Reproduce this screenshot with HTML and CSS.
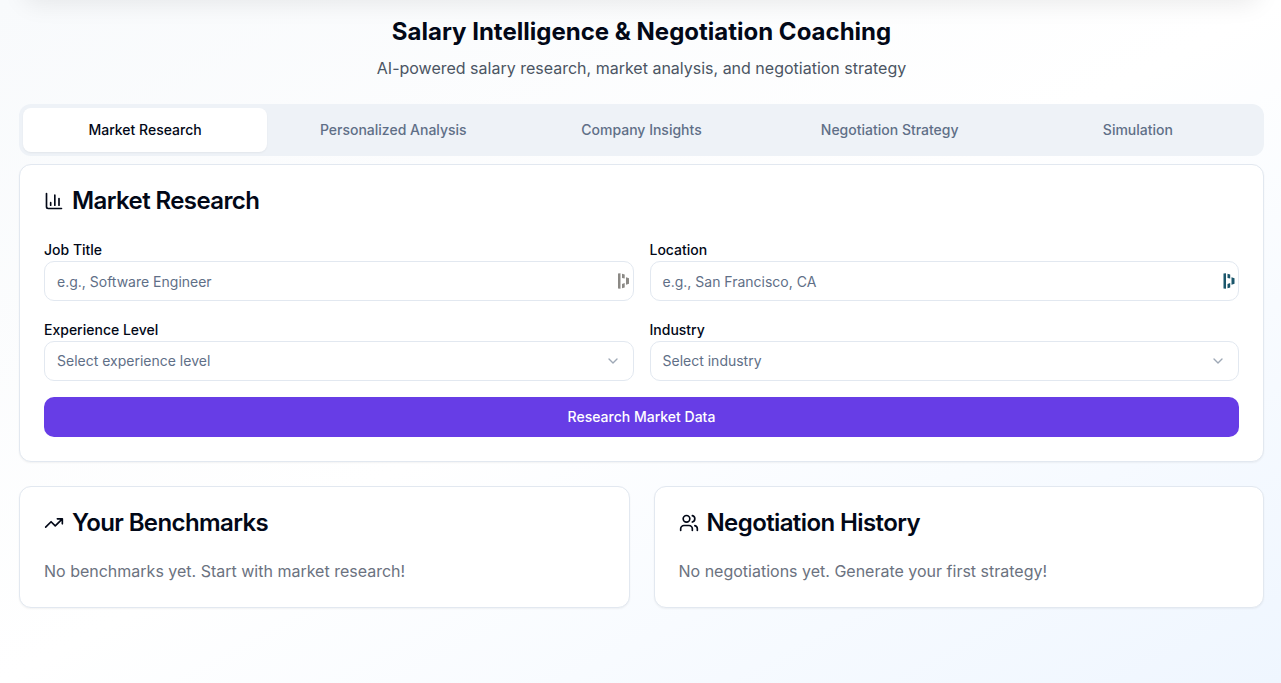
FILE: index.html
```html
<!DOCTYPE html>
<html lang="en">
<head>
<meta charset="utf-8">
<title>Salary Intelligence</title>
<link rel="stylesheet" href="styles.css">
</head>
<body>
<div class="nav-edge"></div>
<main class="page">
  <header class="intro">
    <h1>Salary Intelligence &amp; Negotiation Coaching</h1>
    <p>AI-powered salary research, market analysis, and negotiation strategy</p>
  </header>
  <nav class="tabs">
    <button class="tab tab-active">Market Research</button>
    <button class="tab">Personalized Analysis</button>
    <button class="tab">Company Insights</button>
    <button class="tab">Negotiation Strategy</button>
    <button class="tab">Simulation</button>
  </nav>
  <section class="card">
    <h2 class="card-title">
      <svg class="icon" viewBox="0 0 24 24"><path d="M3 3v16a2 2 0 0 0 2 2h16M18 17V9M13 17V5M8 17v-3"/></svg>
      Market Research
    </h2>
    <div class="form">
      <div class="field">
        <label>Job Title</label>
        <div class="control text-control"><span>e.g., Software Engineer</span>
          <svg class="fill-mark mark-gray" viewBox="0 0 12 16"><path d="M0 .6 2.500.3v15.400L0 15.400zM4 .7l2.700.8v4L4 4.900zM8 4.200l3 1v5.600l-3 1zM4 11l2.700-1v4.500L4 15.300z"/></svg>
        </div>
      </div>
      <div class="field">
        <label>Location</label>
        <div class="control text-control"><span>e.g., San Francisco, CA</span>
          <svg class="fill-mark mark-teal" viewBox="0 0 12 16"><path d="M.5.6 3 .3v15.400L.5 15.400zM4.500.7l2.700.8v4l-2.700-.6zM8.500 4.200l3 1v5.600l-3 1zM4.500 11l2.700-1v4.500l-2.700.8z"/></svg>
        </div>
      </div>
      <div class="field">
        <label>Experience Level</label>
        <div class="control"><span>Select experience level</span>
          <svg class="chevron" viewBox="0 0 24 24"><path d="m6 9 6 6 6-6"/></svg>
        </div>
      </div>
      <div class="field">
        <label>Industry</label>
        <div class="control"><span>Select industry</span>
          <svg class="chevron" viewBox="0 0 24 24"><path d="m6 9 6 6 6-6"/></svg>
        </div>
      </div>
    </div>
    <button class="submit">Research Market Data</button>
  </section>
  <div class="summary">
    <section class="card">
      <h2 class="card-title">
        <svg class="icon" viewBox="0 0 24 24"><path d="m22 7-8.500 8.500-5-5L2 17M16 7h6v6"/></svg>
        Your Benchmarks
      </h2>
      <p class="empty">No benchmarks yet. Start with market research!</p>
    </section>
    <section class="card">
      <h2 class="card-title">
        <svg class="icon" viewBox="0 0 24 24"><path d="M16 21v-2a4 4 0 0 0-4-4H6a4 4 0 0 0-4 4v2"/><circle cx="9" cy="7" r="4"/><path d="M22 21v-2a4 4 0 0 0-3-3.870M16 3.130a4 4 0 0 1 0 7.750"/></svg>
        Negotiation History
      </h2>
      <p class="empty">No negotiations yet. Generate your first strategy!</p>
    </section>
  </div>
</main>
</body>
</html>
```
FILE: styles.css
```css
* { box-sizing: border-box; margin: 0; }
body {
  height: 683px;
  overflow: hidden;
  position: relative;
  font-family: Inter, "Liberation Sans", sans-serif;
  font-size: 16px;
  line-height: 24px;
  color: #020817;
  background: linear-gradient(to bottom right, #f8fafc, #ffffff 50%, #eff6ff);
}
button { border: 0; font: inherit; }
/* shadow cast by the floating bar above the viewport */
.nav-edge {
  position: absolute;
  top: -71px;
  left: 19px;
  right: 17px;
  height: 60px;
  border-radius: 16px;
  box-shadow: 0 20px 25px -5px rgba(0, 0, 0, .08);
}
.page { padding: 16px 17px 0 19px; position: relative; }
.intro { text-align: center; margin-bottom: 24px; }
.intro h1 { font-size: 24px; line-height: 32px; font-weight: 700; margin-bottom: 8px; }
.intro p { color: #4b5563; }
.tabs {
  display: grid;
  grid-template-columns: repeat(5, 1fr);
  gap: 4px;
  height: 52px;
  padding: 4px;
  margin-bottom: 8px;
  border-radius: 12px;
  background: #eef2f7;
}
.tab {
  border-radius: 8px;
  background: transparent;
  color: #5f6f87;
  font-size: 14px;
  line-height: 20px;
  font-weight: 500;
}
.tab-active { background: #fff; color: #020817; box-shadow: 0 1px 2px rgba(0, 0, 0, .05); }
.card {
  padding: 24px;
  border: 1px solid #e2e8f0;
  border-radius: 12px;
  background: #fff;
  box-shadow: 0 1px 2px rgba(0, 0, 0, .05);
}
.card-title {
  display: flex;
  align-items: center;
  gap: 8px;
  margin-bottom: 24px;
  font-size: 24px;
  line-height: 24px;
  font-weight: 600;
  letter-spacing: -.6px;
}
.icon, .chevron { fill: none; stroke: currentColor; stroke-width: 2; stroke-linecap: round; stroke-linejoin: round; }
.icon { width: 20px; height: 20px; }
.form { display: grid; grid-template-columns: 1fr 1fr; gap: 16px; margin-bottom: 16px; }
.field label { display: block; height: 24px; font-size: 14px; line-height: 26px; font-weight: 500; }
.control {
  display: flex;
  align-items: center;
  justify-content: space-between;
  height: 40px;
  padding: 0 12px;
  border: 1px solid #e2e8f0;
  border-radius: 10px;
  color: #5f6f87;
  font-size: 14px;
  line-height: 20px;
}
.text-control { padding-right: 3px; }
.text-control span { padding-top: 1px; }
.chevron { width: 16px; height: 16px; opacity: .6; }
.fill-mark { width: 12px; height: 16px; }
.mark-gray { fill: #8b8985; }
.mark-teal { fill: #1b566b; }
.submit {
  display: block;
  width: 100%;
  height: 40px;
  border-radius: 10px;
  background: #673de6;
  color: #fff;
  font-size: 14px;
  font-weight: 500;
}
.summary { display: grid; grid-template-columns: 1fr 1fr; gap: 24px; margin-top: 24px; }
.empty { color: #6b7280; }
```
